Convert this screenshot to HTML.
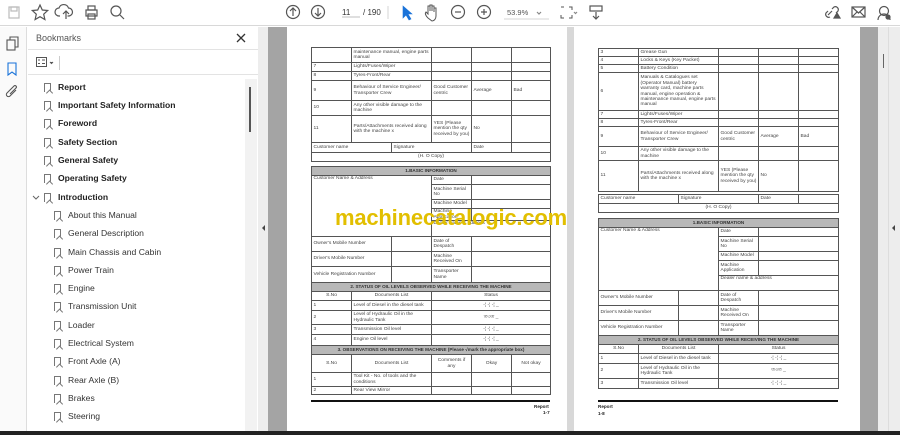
<!DOCTYPE html>
<html><head><meta charset="utf-8"><style>
*{margin:0;padding:0;box-sizing:border-box}
body{width:900px;height:435px;overflow:hidden;background:#fff;font-family:"Liberation Sans",sans-serif;position:relative}
.a{position:absolute}
#tb{left:0;top:0;width:900px;height:26px;background:#fff;border-bottom:1px solid #d8d8d8}
#nav{left:0;top:27px;width:27px;height:404px;background:#fafafa;border-right:1px solid #ddd}
#side{left:28px;top:27px;width:230px;height:404px;background:#fff}
.bm{position:absolute;font-size:8.6px;color:#333;white-space:nowrap}
.bm b{font-weight:bold;color:#222}
.ic{position:absolute;width:7px;height:9px;border:1px solid #777;border-bottom:none}
.ic:after{content:"";position:absolute;left:0.5px;bottom:-1px;width:4px;height:4px;border-left:1px solid #777;border-top:1px solid #777;transform:rotate(45deg);transform-origin:0 100%;background:#fff}
.pg{background:#fff;position:absolute}
table{border-collapse:collapse;table-layout:fixed;position:absolute;font-size:4.9px;color:#444;font-family:"Liberation Sans",sans-serif}
td{border:0.8px solid #555;padding:0 1.5px;vertical-align:middle;line-height:5.4px;overflow:hidden}
td.h{background:#b8b8b8;text-align:center;font-weight:bold;color:#333;font-size:4.6px}
td.c{text-align:center}
.ft{position:absolute;font-size:4.6px;font-weight:bold;color:#222}
</style></head><body>
<div id="tb" class="a">
<svg width="900" height="26" class="a" style="left:0;top:0" fill="none" stroke="#555" stroke-width="1.2">
<rect x="9" y="7" width="10" height="11" stroke="#bbb"/><rect x="11" y="7" width="6" height="4" stroke="#bbb"/>
<path d="M40 5l2.3 5 5.4.5-4 3.7 1.2 5.3-4.9-2.8-4.9 2.8 1.2-5.3-4-3.7 5.4-.5z"/>
<path d="M60 16h-1a4 4 0 0 1 0-8 5 5 0 0 1 9.5 0 4 4 0 0 1 0 8h-1M66 19v-8m-3 3l3-3 3 3"/>
<rect x="86" y="10" width="11" height="6"/><rect x="88" y="6" width="7" height="4"/><rect x="88" y="14" width="7" height="5"/>
<circle cx="116" cy="11" r="5"/><path d="M120 15l4 4"/>
<circle cx="293" cy="12" r="6.5"/><path d="M293 16v-8m-3 3l3-3 3 3"/>
<circle cx="318" cy="12" r="6.5"/><path d="M318 8v8m-3-3l3 3 3-3"/>
<path d="M342 17h18" stroke="#ccc"/>
<path d="M388 6v13" stroke="#ddd"/>
<path d="M403 6v12l3-3 3 5 2-1-3-5h4z" fill="#1a73d9" stroke="#1a73d9" stroke-width=".6"/>
<path d="M428 18c-3-3-3-5-2-6l2 2v-8h2v5-6h2v6-5h2v6-4h2v8c0 3-2 5-4 5z" stroke-width="1"/>
<circle cx="458" cy="12" r="6.5"/><path d="M455 12h6"/>
<circle cx="484" cy="12" r="6.5"/><path d="M481 12h6M484 9v6"/>
<path d="M504 19h45" stroke="#ddd"/>
<path d="M537 12l2 2 2-2" stroke="#888"/>
<path d="M561 7h3m5 0h3v3m0 5v3h-3m-5 0h-3v-3m0-5z" stroke-width="1"/>
<path d="M574 12l1.5 1.5 1.5-1.5" stroke="#888"/>
<rect x="590" y="6" width="12" height="5"/><path d="M596 12v7m-3-3l3 3 3-3"/>
<path d="M828 15l4-4m-2 6a3 3 0 0 1-4-4l2-2m4-2l2-2a3 3 0 0 1 4 4l-2 2"/><path d="M834 18l3-5 3 5z" fill="#555"/>
<rect x="852" y="7" width="13" height="10"/><path d="M852 7l6.5 6 6.5-6M852 17l5-5m8 5l-5-5"/>
<circle cx="884" cy="11" r="4.5"/><path d="M878 20a6 6 0 0 1 12 0" /><circle cx="888" cy="17" r="2" fill="#555"/>
</svg>
<div class="a" style="left:342px;top:8px;font-size:8px;color:#333">11</div>
<div class="a" style="left:363px;top:8px;font-size:8px;color:#333">/ 190</div>
<div class="a" style="left:507px;top:8px;font-size:7.5px;color:#555">53.9%</div>
</div>
<div id="nav" class="a">
<svg width="27" height="80" class="a" style="left:0;top:0" fill="none" stroke="#555" stroke-width="1.1">
<rect x="7" y="13" width="8" height="10"/><path d="M10 13v-3h8v10h-3"/>
<path d="M8 36h8v12l-4-3-4 3z" stroke="#1a73d9"/>
<path d="M16 63l-6 6a2 2 0 0 1-3-3l7-7a1.3 1.3 0 0 1 2 2l-6 6"/>
</svg>
<div class="a" style="left:25px;top:32px;width:6px;height:12px;border-right:1px solid #ddd"></div>
</div>
<div id="side" class="a">
<div class="a" style="left:8px;top:6px;font-size:9px;color:#555">Bookmarks</div>
<svg class="a" style="left:207px;top:5px" width="12" height="12" stroke="#333" stroke-width="1.3"><path d="M2 2l8 8M10 2l-8 8"/></svg>
<div class="a" style="left:0;top:22px;width:230px;border-top:1px solid #e3e3e3"></div>
<svg class="a" style="left:8px;top:30px" width="20" height="12" fill="none" stroke="#555" stroke-width="1"><rect x="0.5" y="0.5" width="10" height="9"/><path d="M2 3h2m2 0h3M2 6.5h2m2 0h3"/><path d="M14 5l1.5 1.5 1.5-1.5" fill="#555"/></svg>
<div class="a" style="left:31px;top:29px;height:14px;border-left:1px solid #ccc"></div>
<div class="a" style="left:0;top:47px;width:230px;border-top:1px solid #e3e3e3"></div>
<div class="a" style="left:217px;top:52px;width:12px;height:352px;background:#f2f2f2"></div>
<div class="a" style="left:221px;top:60px;width:1.5px;height:45px;background:#555"></div>
</div>
<div class="a" style="left:258px;top:27px;width:10px;height:404px;background:#ededed"></div>
<div class="a" style="left:268px;top:27px;width:19px;height:404px;background:#a4a4a4"></div>
<div class="a" style="left:567px;top:27px;width:7px;height:404px;background:#d8d8d8"></div>
<div class="a" style="left:860px;top:27px;width:18px;height:404px;background:#a4a4a4"></div>
<div class="a" style="left:878px;top:27px;width:22px;height:404px;background:#ededed"></div>
<div class="a" style="left:888px;top:27px;width:1px;height:404px;background:#ddd"></div>
<div class="a" style="left:883px;top:54px;width:1px;height:14px;background:#666"></div>
<div class="a" style="left:262px;top:225px;width:0;height:0;border:3px solid transparent;border-right:3px solid #444;border-left:none"></div>
<div class="a" style="left:892px;top:225px;width:0;height:0;border:3px solid transparent;border-right:3px solid #444;border-left:none"></div>
<div class="a" style="left:0;top:431px;width:900px;height:4px;background:#222"></div>

<div id="bms">
<div class="ic" style="left:44px;top:83px"></div><div class="bm" style="left:58px;top:82px"><b>Report</b></div>
<div class="ic" style="left:44px;top:101px"></div><div class="bm" style="left:58px;top:100px"><b>Important Safety Information</b></div>
<div class="ic" style="left:44px;top:119px"></div><div class="bm" style="left:58px;top:118px"><b>Foreword</b></div>
<div class="ic" style="left:44px;top:138px"></div><div class="bm" style="left:58px;top:137px"><b>Safety Section</b></div>
<div class="ic" style="left:44px;top:156px"></div><div class="bm" style="left:58px;top:155px"><b>General Safety</b></div>
<div class="ic" style="left:44px;top:174px"></div><div class="bm" style="left:58px;top:173px"><b>Operating Safety</b></div>
<svg class="a" style="left:32px;top:195px" width="8" height="6" fill="none" stroke="#666"><path d="M1 1l3 3 3-3"/></svg>
<div class="ic" style="left:44px;top:193px"></div><div class="bm" style="left:58px;top:192px"><b>Introduction</b></div>
<div class="ic" style="left:54px;top:211px"></div><div class="bm" style="left:68px;top:210px">About this Manual</div>
<div class="ic" style="left:54px;top:229px"></div><div class="bm" style="left:68px;top:228px">General Description</div>
<div class="ic" style="left:54px;top:248px"></div><div class="bm" style="left:68px;top:247px">Main Chassis and Cabin</div>
<div class="ic" style="left:54px;top:266px"></div><div class="bm" style="left:68px;top:265px">Power Train</div>
<div class="ic" style="left:54px;top:284px"></div><div class="bm" style="left:68px;top:283px">Engine</div>
<div class="ic" style="left:54px;top:302px"></div><div class="bm" style="left:68px;top:301px">Transmission Unit</div>
<div class="ic" style="left:54px;top:321px"></div><div class="bm" style="left:68px;top:320px">Loader</div>
<div class="ic" style="left:54px;top:339px"></div><div class="bm" style="left:68px;top:338px">Electrical System</div>
<div class="ic" style="left:54px;top:357px"></div><div class="bm" style="left:68px;top:356px">Front Axle (A)</div>
<div class="ic" style="left:54px;top:376px"></div><div class="bm" style="left:68px;top:375px">Rear Axle (B)</div>
<div class="ic" style="left:54px;top:394px"></div><div class="bm" style="left:68px;top:393px">Brakes</div>
<div class="ic" style="left:54px;top:412px"></div><div class="bm" style="left:68px;top:411px">Steering</div>
</div>

<!-- LEFT PAGE -->
<div class="pg" style="left:287px;top:27px;width:280px;height:404px"></div>
<table style="left:311px;top:47px;width:239px">
<colgroup><col style="width:40px"><col style="width:80px"><col style="width:40px"><col style="width:40px"><col style="width:39px"></colgroup>
<tr style="height:15px"><td></td><td>maintenance manual, engine parts manual</td><td></td><td></td><td></td></tr>
<tr style="height:9px"><td>7</td><td>Lights/Fuses/Wiper</td><td></td><td></td><td></td></tr>
<tr style="height:9px"><td>8</td><td>Tyres-Front/Rear</td><td></td><td></td><td></td></tr>
<tr style="height:20px"><td>9</td><td>Behaviour of Service Engineer/ Transporter Crew</td><td>Good Customer centric</td><td>Average</td><td>Bad</td></tr>
<tr style="height:15px"><td>10</td><td>Any other visible damage to the machine</td><td></td><td></td><td></td></tr>
<tr style="height:27px"><td>11</td><td>Parts/Attachments received along with the machine x</td><td>YES (Please mention the qty received by you)</td><td>No</td><td></td></tr>
</table>
<table style="left:311px;top:142px;width:239px">
<colgroup><col style="width:80px"><col style="width:80px"><col style="width:40px"><col style="width:39px"></colgroup>
<tr style="height:10px"><td>Customer name</td><td>Signature</td><td>Date</td><td></td></tr>
<tr style="height:9px"><td colspan="4" class="c">(H. O Copy)</td></tr>
</table>
<table style="left:311px;top:166px;width:239px">
<colgroup><col style="width:40px"><col style="width:40px"><col style="width:40px"><col style="width:40px"><col style="width:79px"></colgroup>
<tr style="height:9px"><td colspan="5" class="h">1.BASIC INFORMATION</td></tr>
<tr style="height:9px"><td colspan="3" rowspan="5" style="vertical-align:top">Customer Name &amp; Address</td><td>Date</td><td></td></tr>
<tr style="height:15px"><td>Machine Serial No</td><td></td></tr>
<tr style="height:9px"><td>Machine Model</td><td></td></tr>
<tr style="height:12px"><td>Machine Application</td><td></td></tr>
<tr style="height:16px"><td colspan="2" style="vertical-align:top">Dealer name &amp; address</td></tr>
<tr style="height:15px"><td colspan="2">Owner's Mobile Number</td><td></td><td>Date of Despatch</td><td></td></tr>
<tr style="height:15px"><td colspan="2">Driver's Mobile Number</td><td></td><td>Machine Received On</td><td></td></tr>
<tr style="height:16px"><td colspan="2">Vehicle Registration Number</td><td></td><td>Transporter Name</td><td></td></tr>
</table>
<table style="left:311px;top:282px;width:239px">
<colgroup><col style="width:40px"><col style="width:80px"><col style="width:40px"><col style="width:40px"><col style="width:39px"></colgroup>
<tr style="height:9px"><td colspan="5" class="h">2. STATUS OF OIL LEVELS OBSERVED WHILE RECEIVING THE MACHINE</td></tr>
<tr style="height:9px"><td class="c">S.No</td><td class="c">Documents List</td><td colspan="3" class="c">Status</td></tr>
<tr style="height:10px"><td>1</td><td>Level of Diesel in the diesel tank</td><td colspan="3" class="c">-¦ -¦ -¦ _</td></tr>
<tr style="height:14px"><td>2</td><td>Level of Hydraulic Oil in the Hydraulic Tank</td><td colspan="3" class="c">ত৩ত _</td></tr>
<tr style="height:10px"><td>3</td><td>Transmission Oil level</td><td colspan="3" class="c">-¦ -¦ -¦ _</td></tr>
<tr style="height:11px"><td>4</td><td>Engine Oil level</td><td colspan="3" class="c">-¦ -¦ -¦ _</td></tr>
<tr style="height:9px"><td colspan="5" class="h">3. OBSERVATIONS ON RECEIVING THE MACHINE (Please √mark the appropriate box)</td></tr>
<tr style="height:18px"><td class="c">S.No</td><td class="c">Documents List</td><td class="c">Comments if any</td><td class="c">Okay</td><td class="c">Not okay</td></tr>
<tr style="height:14px"><td>1</td><td>Tool Kit - No. of tools and the conditions</td><td></td><td></td><td></td></tr>
<tr style="height:8px"><td>2</td><td>Rear View Mirror</td><td></td><td></td><td></td></tr>
</table>
<div class="a" style="left:311px;top:400px;width:239px;height:1.5px;background:#111"></div>
<div class="ft" style="left:534px;top:404px">Report</div>
<div class="ft" style="left:543px;top:410px">1-7</div>

<!-- RIGHT PAGE -->
<div class="pg" style="left:574px;top:27px;width:286px;height:404px"></div>
<table style="left:598px;top:48px;width:240px">
<colgroup><col style="width:40px"><col style="width:80px"><col style="width:40px"><col style="width:40px"><col style="width:40px"></colgroup>
<tr style="height:8px"><td>3</td><td>Grease Gun</td><td></td><td></td><td></td></tr>
<tr style="height:8px"><td>4</td><td>Locks &amp; Keys (Key Packet)</td><td></td><td></td><td></td></tr>
<tr style="height:8px"><td>5</td><td>Battery Condition</td><td></td><td></td><td></td></tr>
<tr style="height:38px"><td>6</td><td>Manuals &amp; Catalogues set (Operator Manual) battery warranty card, machine parts manual, engine operation &amp; maintenance manual, engine parts manual</td><td></td><td></td><td></td></tr>
<tr style="height:8px"><td>7</td><td>Lights/Fuses/Wiper</td><td></td><td></td><td></td></tr>
<tr style="height:8px"><td>8</td><td>Tyres-Front/Rear</td><td></td><td></td><td></td></tr>
<tr style="height:20px"><td>9</td><td>Behaviour of Service Engineer/ Transporter Crew</td><td>Good Customer centric</td><td>Average</td><td>Bad</td></tr>
<tr style="height:14px"><td>10</td><td>Any other visible damage to the machine</td><td></td><td></td><td></td></tr>
<tr style="height:31px"><td>11</td><td>Parts/Attachments received along with the machine x</td><td>YES (Please mention the qty received by you)</td><td>No</td><td></td></tr>
</table>
<table style="left:598px;top:194px;width:240px">
<colgroup><col style="width:80px"><col style="width:80px"><col style="width:40px"><col style="width:40px"></colgroup>
<tr style="height:9px"><td>Customer name</td><td>Signature</td><td>Date</td><td></td></tr>
<tr style="height:9px"><td colspan="4" class="c">(H. O Copy)</td></tr>
</table>
<table style="left:598px;top:218px;width:240px">
<colgroup><col style="width:40px"><col style="width:40px"><col style="width:40px"><col style="width:40px"><col style="width:80px"></colgroup>
<tr style="height:9px"><td colspan="5" class="h">1.BASIC INFORMATION</td></tr>
<tr style="height:9px"><td colspan="3" rowspan="5" style="vertical-align:top">Customer Name &amp; Address</td><td>Date</td><td></td></tr>
<tr style="height:15px"><td>Machine Serial No</td><td></td></tr>
<tr style="height:9px"><td>Machine Model</td><td></td></tr>
<tr style="height:15px"><td>Machine Application</td><td></td></tr>
<tr style="height:15px"><td colspan="2" style="vertical-align:top">Dealer name &amp; address</td></tr>
<tr style="height:15px"><td colspan="2">Owner's Mobile Number</td><td></td><td>Date of Despatch</td><td></td></tr>
<tr style="height:15px"><td colspan="2">Driver's Mobile Number</td><td></td><td>Machine Received On</td><td></td></tr>
<tr style="height:15px"><td colspan="2">Vehicle Registration Number</td><td></td><td>Transporter Name</td><td></td></tr>
</table>
<table style="left:598px;top:335px;width:240px">
<colgroup><col style="width:40px"><col style="width:80px"><col style="width:120px"></colgroup>
<tr style="height:9px"><td colspan="3" class="h">2. STATUS OF OIL LEVELS OBSERVED WHILE RECEIVING THE MACHINE</td></tr>
<tr style="height:9px"><td class="c">S.No</td><td class="c">Documents List</td><td class="c">Status</td></tr>
<tr style="height:10px"><td>1</td><td>Level of Diesel in the diesel tank</td><td class="c">-¦ -¦ -¦ _</td></tr>
<tr style="height:15px"><td>2</td><td>Level of Hydraulic Oil in the Hydraulic Tank</td><td class="c">ত৩ত _</td></tr>
<tr style="height:10px"><td>3</td><td>Transmission Oil level</td><td class="c">-¦ -¦ -¦ _</td></tr>
</table>
<div class="a" style="left:598px;top:400px;width:240px;height:1.5px;background:#111"></div>
<div class="ft" style="left:598px;top:404px">Report</div>
<div class="ft" style="left:598px;top:411px">1-8</div>

<div class="a" style="left:335px;top:205px;font-size:22px;font-weight:bold;color:#e2bf00;white-space:nowrap;letter-spacing:-0.2px">machinecatalogic.com</div>
</body></html>
